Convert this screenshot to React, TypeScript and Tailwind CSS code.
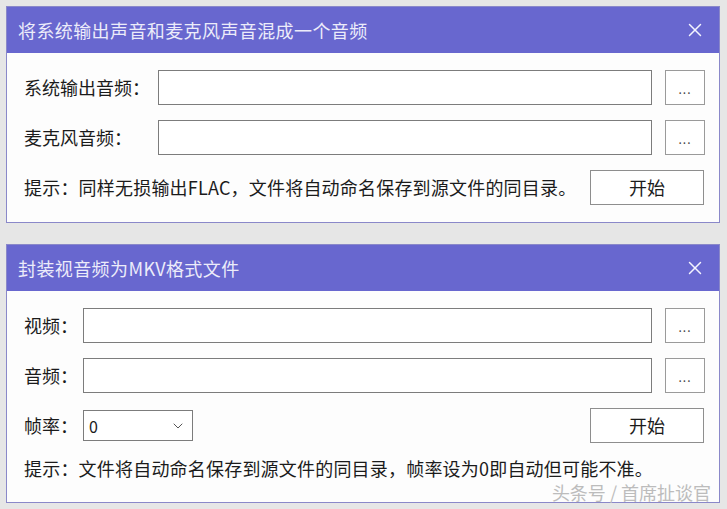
import { X, ChevronDown } from "lucide-react";

const font = { fontFamily: '"Noto Sans CJK SC", "Noto Sans", sans-serif' };

function TitleBar({ title }: { title: string }) {
  return (
    <div className="flex h-[46px] items-center justify-between bg-[#6867cf] pl-[11px] pr-[13px]">
      <span className="text-[18px] tracking-[0.4px] text-[#ececfa]">{title}</span>
      <X size={22} strokeWidth={1.6} className="text-[#f4f4ff]" />
    </div>
  );
}

function PathRow({ label, labelWidth }: { label: string; labelWidth: string }) {
  return (
    <div className="flex items-center">
      <span className={`${labelWidth} shrink-0 text-[18px] text-[#1b1b1b]`}>{label}</span>
      <div className="h-[35px] flex-1 border border-[#7c7c7c] bg-white" />
      <button className="ml-[13px] flex h-[35px] w-[40px] items-center justify-center border border-[#9a9a9a] bg-white pt-[3px] text-[12px] tracking-[1px] text-[#444]">
        ...
      </button>
    </div>
  );
}

function StartButton() {
  return (
    <button className="flex h-[35px] w-[114px] items-center justify-center border border-[#8e8e8e] bg-white text-[18px] text-[#1b1b1b]">
      开始
    </button>
  );
}

export default function App() {
  return (
    <div
      className="relative flex h-[509px] w-[727px] flex-col gap-[21px] overflow-hidden bg-[#e6e6e6] pl-[6px] pt-[6px]"
      style={font}
    >
      {/* 混音面板 */}
      <div className="flex h-[217px] w-[714px] flex-col border border-[#8a88c9] bg-[#fdfdfd]">
        <TitleBar title="将系统输出声音和麦克风声音混成一个音频" />
        <div className="flex flex-col gap-[15px] pl-[17px] pr-[14px] pt-[17px]">
          <PathRow label="系统输出音频：" labelWidth="w-[134px]" />
          <PathRow label="麦克风音频：" labelWidth="w-[134px]" />
          <div className="flex items-center justify-between pr-[1px]">
            <span className="text-[18px] tracking-[0.2px] text-[#1b1b1b]">
              提示：同样无损输出FLAC，文件将自动命名保存到源文件的同目录。
            </span>
            <StartButton />
          </div>
        </div>
      </div>

      {/* 封装面板 */}
      <div className="flex h-[259px] w-[714px] flex-col border border-[#8a88c9] bg-[#fdfdfd]">
        <TitleBar title="封装视音频为MKV格式文件" />
        <div className="flex flex-col pl-[17px] pr-[14px] pt-[17px]">
          <div className="flex flex-col gap-[15px]">
            <PathRow label="视频：" labelWidth="w-[59px]" />
            <PathRow label="音频：" labelWidth="w-[59px]" />
          </div>
          <div className="mt-[15px] flex items-center justify-between pr-[1px]">
            <div className="flex items-center">
              <span className="w-[59px] text-[18px] text-[#1b1b1b]">帧率：</span>
              <div className="flex h-[31px] w-[110px] items-center justify-between border border-[#7c7c7c] bg-white pl-[5px] pr-[6px] text-[16px] text-[#1b1b1b]">
                <span>0</span>
                <ChevronDown size={16} strokeWidth={1.5} className="text-[#555]" />
              </div>
            </div>
            <StartButton />
          </div>
          <div className="mt-[12px] text-[18px] tracking-[0.2px] text-[#1b1b1b]">
            提示：文件将自动命名保存到源文件的同目录，帧率设为0即自动但可能不准。
          </div>
        </div>
      </div>

      {/* 水印 */}
      <span className="absolute bottom-[3px] right-[16px] text-[18px] text-[#bcbcbc]">
        头条号 / 首席扯谈官
      </span>
    </div>
  );
}
